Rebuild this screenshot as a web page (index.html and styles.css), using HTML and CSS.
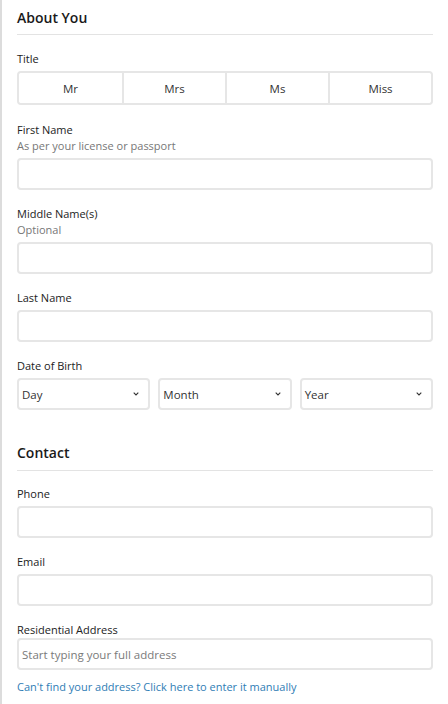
FILE: index.html
```html
<!DOCTYPE html>
<html>
<head>
<meta charset="utf-8">
<link rel="stylesheet" href="styles.css">
</head>
<body>
<div class="panel">
  <section class="section">
    <h2 class="section-title">About You</h2>
    <div class="field title-field">
      <label class="label">Title</label>
      <div class="segmented">
        <button class="seg">Mr</button>
        <button class="seg">Mrs</button>
        <button class="seg">Ms</button>
        <button class="seg">Miss</button>
      </div>
    </div>
    <div class="field">
      <label class="label">First Name</label>
      <div class="hint">As per your license or passport</div>
      <input class="input" type="text">
    </div>
    <div class="field">
      <label class="label">Middle Name(s)</label>
      <div class="hint">Optional</div>
      <input class="input" type="text">
    </div>
    <div class="field">
      <label class="label">Last Name</label>
      <input class="input" type="text">
    </div>
    <div class="field">
      <label class="label">Date of Birth</label>
      <div class="dob">
        <div class="select"><span>Day</span><svg class="chev" viewBox="0 0 6 4" width="6" height="4"><path d="M0.7 0.7l2.3 2.3 2.3-2.3" fill="none" stroke="#333" stroke-width="1.1"/></svg></div>
        <div class="select"><span>Month</span><svg class="chev" viewBox="0 0 6 4" width="6" height="4"><path d="M0.7 0.7l2.3 2.3 2.3-2.3" fill="none" stroke="#333" stroke-width="1.1"/></svg></div>
        <div class="select"><span>Year</span><svg class="chev" viewBox="0 0 6 4" width="6" height="4"><path d="M0.7 0.7l2.3 2.3 2.3-2.3" fill="none" stroke="#333" stroke-width="1.1"/></svg></div>
      </div>
    </div>
  </section>
  <section class="section contact">
    <h2 class="section-title">Contact</h2>
    <div class="field">
      <label class="label">Phone</label>
      <input class="input" type="text">
    </div>
    <div class="field">
      <label class="label">Email</label>
      <input class="input" type="text">
    </div>
    <div class="field">
      <label class="label">Residential Address</label>
      <input class="input address" type="text" placeholder="Start typing your full address">
      <a class="manual" href="#">Can't find your address? Click here to enter it manually</a>
    </div>
  </section>
</div>
</body>
</html>
```
FILE: styles.css
```css
* { box-sizing: border-box; }
html, body { margin: 0; padding: 0; background: #fff; }
body {
  font-family: "Open Sans", "Liberation Sans", sans-serif;
  color: #222;
  width: 448px;
  height: 704px;
  overflow: hidden;
}
.panel {
  border-left: 2px solid #dcdcdc;
  padding: 0 15px;
  min-height: 704px;
}
.section-title {
  margin: 0;
  padding-top: 8px;
  font-size: 14px;
  font-weight: 600;
  line-height: 20px;
  color: #1a1a1a;
  padding-bottom: 6px;
  border-bottom: 1px solid #e3e3e3;
  margin-bottom: 16px;
}
.contact .section-title { padding-top: 0; margin-top: 33px; padding-bottom: 7px; margin-bottom: 15px; }
.field { margin-bottom: 16px; }
.title-field { margin-bottom: 17px; }
.label {
  display: block;
  font-size: 11px;
  line-height: 16px;
  color: #222;
}
.hint {
  font-size: 11px;
  line-height: 16px;
  color: #777;
}
.label + .segmented, .label + .input, .label + .dob, .hint + .input { margin-top: 4px; }
.segmented {
  display: grid;
  grid-template-columns: repeat(4, 1fr);
  border: 2px solid #e6e6e6;
  border-radius: 4px;
  height: 34px;
}
.seg {
  font-family: inherit;
  font-size: 11.5px;
  color: #333;
  background: #fff;
  border: 0;
  border-left: 2px solid #e6e6e6;
  padding: 0;
  border-radius: 0;
}
.seg:first-child { border-left: 0; border-radius: 3px 0 0 3px; }
.seg:last-child { border-radius: 0 3px 3px 0; }
.input {
  display: block;
  width: 100%;
  height: 32px;
  border: 2px solid #e6e6e6;
  border-radius: 4px;
  font-family: inherit;
  font-size: 11.5px;
  padding: 0 3px;
  color: #333;
  outline: none;
}
.input::placeholder { color: #7a7a7a; }
.label + .address { margin-top: 0; }
.dob {
  display: grid;
  grid-template-columns: 1fr 1fr 1fr;
  gap: 8px;
}
.select {
  height: 32px;
  border: 2px solid #e6e6e6;
  border-radius: 4px;
  display: flex;
  align-items: center;
  justify-content: space-between;
  padding: 0 9px 0 3px;
  font-size: 11.5px;
  color: #333;
}
.chev { display: block; }
.manual {
  display: block;
  margin-top: 9px;
  font-size: 11px;
  line-height: 16px;
  color: #2f7db5;
  text-decoration: none;
}
```
